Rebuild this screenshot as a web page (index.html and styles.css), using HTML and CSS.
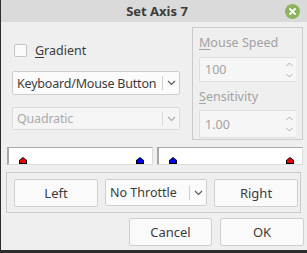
FILE: index.html
```
<!DOCTYPE html>
<html lang="en">
<head>
    <meta charset="UTF-8">
    <title>Set Axis 7</title>
<link rel="stylesheet" href="styles.css">
</head>
<body>
    <div class="window">
        <div class="titlebar">
            <span class="title">Set Axis 7</span>
            <svg class="close" width="15" height="15" viewBox="0 0 15 15">
                <circle cx="7.5" cy="7.5" r="7.5" fill="#8db45c"/>
                <path d="M5 5 L10 10 M10 5 L5 10" stroke="#fff" stroke-width="1.8" stroke-linecap="round"/>
            </svg>
        </div>
        <div class="content">
            <div class="top">
                <div class="left">
                    <label class="check"><span class="box"></span><span><u>G</u>radient</span></label>
                    <div class="combo wide">
                        <span class="txt">Keyboard/Mouse Button</span>
                        <span class="arrow"><svg width="9" height="6" viewBox="0 0 9 6"><path d="M1 1 L4.5 4.5 L8 1" fill="none" stroke="#555" stroke-width="1.1"/></svg></span>
                    </div>
                    <div class="combo wide disabled">
                        <span class="txt">Quadratic</span>
                        <span class="arrow"><svg width="9" height="6" viewBox="0 0 9 6"><path d="M1 1 L4.5 4.5 L8 1" fill="none" stroke="#aaa" stroke-width="1.1"/></svg></span>
                    </div>
                </div>
                <div class="group">
                    <div class="lbl"><u>M</u>ouse Speed</div>
                    <div class="spin">
                        <span class="txt">100</span>
                        <span class="arrows">
                            <svg width="9" height="18" viewBox="0 0 9 18"><path d="M1.5 5 L4.5 2 L7.5 5 M1.5 13 L4.5 16 L7.5 13" fill="none" stroke="#b0b0b0" stroke-width="1"/></svg>
                        </span>
                    </div>
                    <div class="lbl"><u>S</u>ensitivity</div>
                    <div class="spin second">
                        <span class="txt">1.00</span>
                        <span class="arrows">
                            <svg width="9" height="18" viewBox="0 0 9 18"><path d="M1.5 5 L4.5 2 L7.5 5 M1.5 13 L4.5 16 L7.5 13" fill="none" stroke="#b0b0b0" stroke-width="1"/></svg>
                        </span>
                    </div>
                </div>
            </div>
            <div class="meters">
                <div class="meter">
                    <span class="mark red" style="left: 10px"></span>
                    <span class="mark blue" style="left: 127px"></span>
                </div>
                <div class="meter">
                    <span class="mark blue" style="left: 10px"></span>
                    <span class="mark red" style="left: 127px"></span>
                </div>
            </div>
            <div class="throttle">
                <button class="btn">Left</button>
                <div class="combo small">
                    <span class="txt">No Throttle</span>
                    <span class="arrow"><svg width="9" height="6" viewBox="0 0 9 6"><path d="M1 1 L4.5 4.5 L8 1" fill="none" stroke="#555" stroke-width="1.1"/></svg></span>
                </div>
                <button class="btn">Right</button>
            </div>
            <div class="actions">
                <button class="btn">Cancel</button>
                <button class="btn">OK</button>
            </div>
        </div>
    </div>
</body>
</html>
```
FILE: styles.css
```
*{
    margin: 0;
    padding: 0;
    box-sizing: border-box;
}
body{
    width: 307px;
    height: 253px;
    background: #2d2d2d;
    font-family: "Noto Sans", "DejaVu Sans", sans-serif;
    font-size: 12.5px;
    color: #3c3c3c;
    overflow: hidden;
}
.window{
    margin-left: 1px;
    width: 306px;
    height: 250px;
    background: #efefef;
}
.titlebar{
    height: 22px;
    background: #dadada;
    position: relative;
    display: flex;
    justify-content: center;
    align-items: center;
}
.title{
    font-weight: bold;
    font-size: 13px;
    color: #3c3c3c;
    margin-left: 6px;
}
.close{
    position: absolute;
    right: 7px;
    top: 4px;
}
.content{
    padding: 5px 3px 0 5px;
}
.top{
    display: flex;
    height: 113px;
}
.left{
    width: 174px;
    padding-left: 6px;
}
.check{
    display: flex;
    align-items: center;
    gap: 8px;
    margin-top: 15px;
    height: 16px;
    margin-left: 2px;
}
.check .box{
    width: 13px;
    height: 13px;
    background: #fafafa;
    border: 1px solid #c4c4c4;
    border-radius: 2px;
}
.check u, .lbl u{
    text-decoration-thickness: 1px;
    text-underline-offset: 2px;
}
.combo{
    display: flex;
    align-items: center;
    height: 24px;
    background: #fbfbfb;
    border: 1px solid #cfcfcf;
    border-radius: 2px;
    padding-left: 4px;
}
.combo .txt{
    flex: 1;
    white-space: nowrap;
    overflow: hidden;
}
.combo.wide .txt{
    letter-spacing: -0.2px;
}
.combo .arrow{
    width: 17px;
    height: 14px;
    border-left: 1px solid #cfcfcf;
    display: flex;
    align-items: center;
    justify-content: center;
}
.combo.wide{
    width: 168px;
    margin-top: 13px;
}
.combo.wide + .combo.wide{
    height: 23px;
    margin-top: 12px;
}
.disabled{
    color: #aaaaaa;
    background: #f5f5f5;
    border-color: #dadada;
}
.disabled .arrow{
    border-left-color: #dadada;
}
.group{
    margin-left: 12px;
    width: 111px;
    height: 113px;
    border: 1px solid #cacaca;
    padding: 0 6px 0 6px;
    color: #a2a2a2;
}
.lbl{
    height: 19px;
    margin-top: 5px;
    line-height: 19px;
}
.spin{
    display: flex;
    align-items: center;
    height: 25px;
    margin-top: 5px;
    width: 97px;
    background: #f6f6f6;
    border: 1px solid #dedede;
    border-right: none;
    border-radius: 2px;
    padding-left: 5px;
}
.spin.second{
    height: 28px;
    margin-top: 4px;
}
.spin .txt{
    flex: 1;
}
.spin .arrows{
    width: 14px;
    display: flex;
    align-items: center;
    justify-content: center;
}
.meters{
    display: flex;
    gap: 4px;
    margin-top: 7px;
    padding-left: 1px;
}
.meter{
    position: relative;
    width: 146px;
    height: 18px;
    background: #fff;
    border-top: 1px solid #a8a8a8;
    border-left: 2px solid #a8a8a8;
    border-bottom: 1px solid #dcdcdc;
    border-right: 1px solid #dcdcdc;
}
.mark{
    position: absolute;
    bottom: 0;
    width: 8px;
    height: 7px;
    background: #000;
    clip-path: polygon(50% 0, 100% 45%, 100% 100%, 0 100%, 0 45%);
}
.mark::after{
    content: "";
    position: absolute;
    left: 1px;
    top: 1px;
    width: 6px;
    height: 5px;
    clip-path: polygon(50% 0, 100% 45%, 100% 100%, 0 100%, 0 45%);
}
.red::after{
    background: #e60000;
}
.blue::after{
    background: #0000e6;
}
.throttle{
    display: flex;
    align-items: center;
    gap: 7px;
    margin-top: 7px;
    width: 295px;
    height: 41px;
    border: 1px solid #cacaca;
    padding-left: 7px;
}
.btn{
    font-family: inherit;
    font-size: 13px;
    color: #3c3c3c;
    height: 28px;
    width: 84px;
    background: #fafafa;
    border: 1px solid #cfcfcf;
    border-radius: 2px;
}
.combo.small{
    width: 102px;
    height: 27px;
    padding-left: 4px;
}
.actions{
    display: flex;
    justify-content: flex-end;
    gap: 8px;
    margin-top: 5px;
    padding-right: 0;
}
.actions .btn:first-child{
    width: 83px;
}
```
